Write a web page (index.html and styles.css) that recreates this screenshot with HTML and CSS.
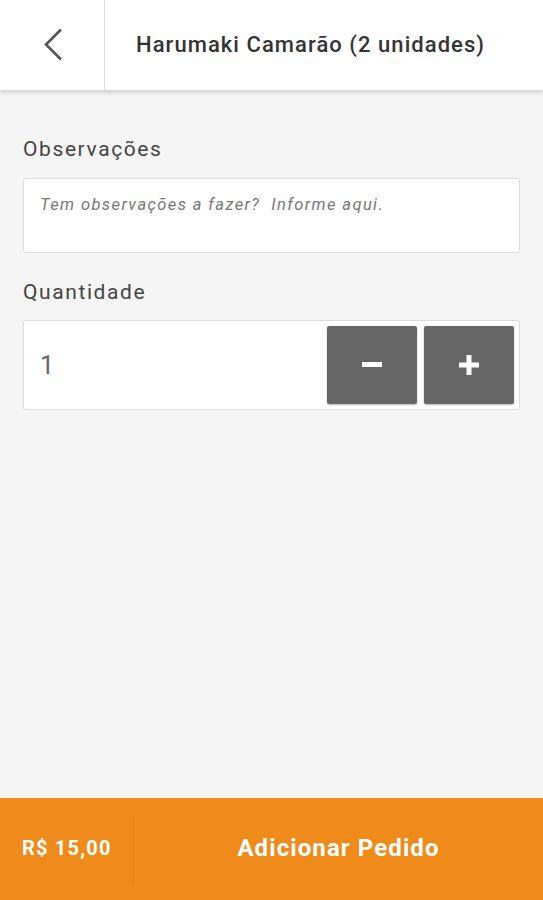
FILE: index.html
```html
<!DOCTYPE html>
<html lang="pt-BR">
<head>
    <meta charset="UTF-8">
    <meta name="viewport" content="width=device-width, initial-scale=1.0">
    <title>Harumaki Camarão</title>
    <link rel="stylesheet" href="styles.css">
</head>
<body>
    <header class="topbar">
        <button class="back" aria-label="Voltar">
            <svg width="21" height="33" viewBox="0 0 21 33">
                <path d="M19 1.5 L4 16.5 L19 31.5" fill="none" stroke="#555" stroke-width="2.6"/>
            </svg>
        </button>
        <h1 class="title">Harumaki Camarão (2 unidades)</h1>
    </header>

    <main class="content">
        <label class="field-label" for="obs">Observações</label>
        <textarea id="obs" class="obs" placeholder="Tem observações a fazer?  Informe aqui."></textarea>

        <label class="field-label qty-label" for="qtd">Quantidade</label>
        <div class="qty">
            <input type="text" id="qtd" class="qty-value" value="1">
            <button class="qty-btn" onclick="mudar(-1)">
                <svg width="22" height="22" viewBox="0 0 22 22"><rect x="1" y="8" width="20" height="5" fill="#fff"/></svg>
            </button>
            <button class="qty-btn" onclick="mudar(1)">
                <svg width="22" height="22" viewBox="0 0 22 22"><rect x="1" y="8.5" width="20" height="5" fill="#fff"/><rect x="8.5" y="1" width="5" height="20" fill="#fff"/></svg>
            </button>
        </div>
    </main>

    <footer class="bottombar">
        <div class="price" id="preco">R$ 15,00</div>
        <button class="add">Adicionar Pedido</button>
    </footer>

    <script>
        function mudar(delta) {
            const campo = document.getElementById("qtd");
            let qtd = parseInt(campo.value) || 1;
            qtd = Math.max(1, qtd + delta);
            campo.value = qtd;
            document.getElementById("preco").textContent = "R$ " + (qtd * 15).toFixed(2).replace(".", ",");
        }
    </script>
</body>
</html>
```

FILE: styles.css
```css
* {
    box-sizing: border-box;
}
html, body {
    height: 100%;
}
body {
    margin: 0;
    font-family: Roboto, "Noto Sans", Arial, sans-serif;
    background-color: #f5f5f5;
    display: flex;
    flex-direction: column;
}
.topbar {
    height: 90px;
    display: flex;
    background-color: #fff;
    box-shadow: 0 2px 5px rgba(0, 0, 0, 0.18);
    position: relative;
    z-index: 1;
}
.back {
    width: 105px;
    border: none;
    border-right: 1px solid #ddd;
    background: none;
    display: flex;
    align-items: center;
    justify-content: center;
    padding: 0 0 2px 0;
}
.title {
    margin: 0 0 0 31px;
    align-self: center;
    font-size: 22px;
    font-weight: 500;
    letter-spacing: 1.05px;
    color: #333;
    padding-bottom: 2px;
}
.content {
    flex: 1;
    padding: 20px 23px 0 23px;
    display: flex;
    flex-direction: column;
}
.field-label {
    font-size: 21px;
    letter-spacing: 1.6px;
    color: #444;
    margin: 27px 0 17px;
    line-height: 24px;
}
.qty-label {
    margin: 22px 0 16px;
}
.obs {
    height: 75px;
    width: 497px;
    resize: none;
    border: 1px solid #dcdcdc;
    border-radius: 3px;
    background-color: #fff;
    padding: 16px 16px;
    font-family: Roboto, "Noto Sans", Arial, sans-serif;
    font-size: 16.5px;
    letter-spacing: 1.4px;
    color: #444;
    margin-bottom: 5px;
}
.obs::placeholder {
    color: #777;
    font-style: italic;
}
.qty {
    width: 497px;
    height: 90px;
    display: flex;
    align-items: center;
    gap: 7px;
    padding: 0 5px 0 0;
    background-color: #fff;
    border: 1px solid #dcdcdc;
    border-radius: 3px;
}
.qty-value {
    flex: 1;
    min-width: 0;
    height: 100%;
    border: none;
    background: none;
    padding: 0 16px;
    font-family: Roboto, "Noto Sans", Arial, sans-serif;
    font-size: 25px;
    color: #666;
    outline: none;
}
.qty-btn {
    width: 90px;
    height: 78px;
    border: none;
    border-radius: 2px;
    background-color: #666;
    display: flex;
    align-items: center;
    justify-content: center;
    box-shadow: 0 1px 2px rgba(0, 0, 0, 0.3);
}
.bottombar {
    height: 102px;
    display: flex;
    align-items: center;
    background-color: #ee8b1a;
    color: #fff;
}
.price {
    width: 134px;
    height: 70px;
    border-right: 1px solid #e6851a;
    display: flex;
    align-items: center;
    padding: 0 0 2px 22px;
    font-size: 20px;
    font-weight: 700;
    letter-spacing: 1.2px;
}
.add {
    flex: 1;
    height: 100%;
    border: none;
    background: none;
    color: #fff;
    font-family: Roboto, "Noto Sans", Arial, sans-serif;
    font-size: 24px;
    font-weight: 700;
    letter-spacing: 1.1px;
    padding: 0 0 2px 0;
}
```
